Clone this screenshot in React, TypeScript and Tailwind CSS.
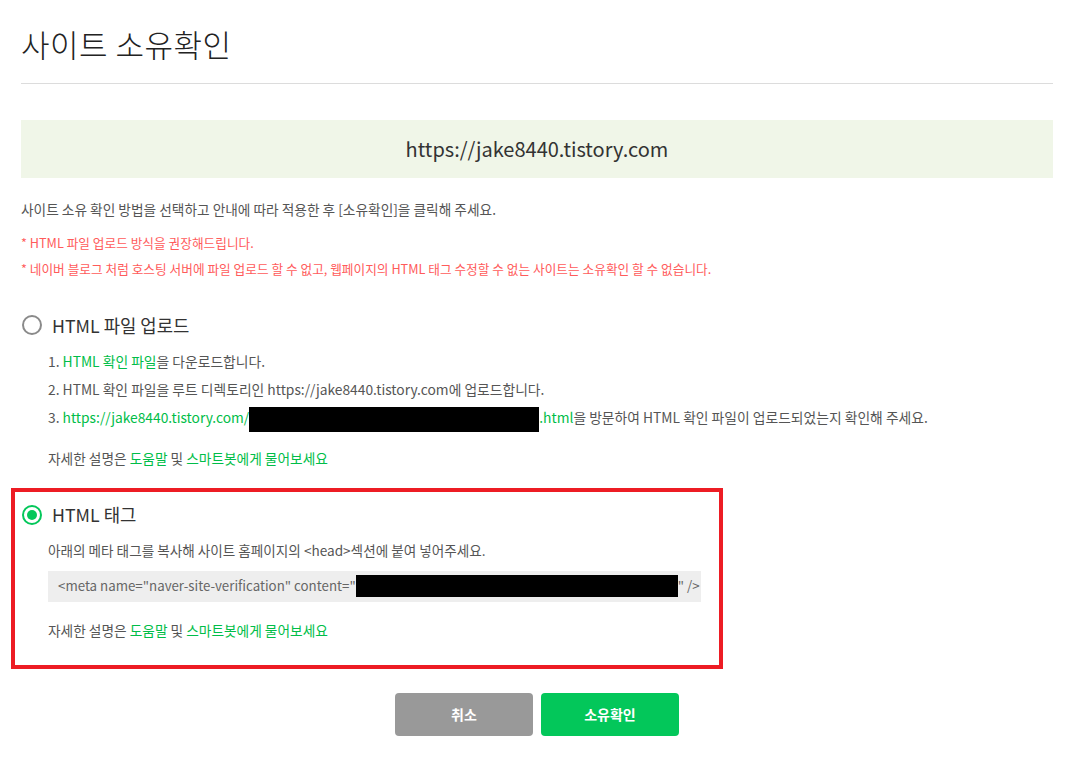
import React, { useState } from 'react';

const FONT = "font-['Noto_Sans_CJK_KR','Noto_Sans',sans-serif]";

const Radio: React.FC<{ checked: boolean }> = ({ checked }) => (
  <span
    className={`flex h-[20px] w-[20px] shrink-0 items-center justify-center rounded-full border-2 ${
      checked ? 'border-[#03c75a]' : 'border-[#8a8a8a]'
    }`}
  >
    {checked && <span className="h-[10px] w-[10px] rounded-full bg-[#03c75a]" />}
  </span>
);

const HelpLine = () => (
  <p className="text-[13.7px] leading-[28px] text-[#555]">
    자세한 설명은 <span className="text-[#00bd48]">도움말</span> 및{' '}
    <span className="text-[#00bd48]">스마트봇에게 물어보세요</span>
  </p>
);

export default function App() {
  const [method, setMethod] = useState<'file' | 'tag'>('tag');
  const site = 'https://jake8440.tistory.com';

  return (
    <div className={`${FONT} min-h-[762px] w-full bg-white pl-[21px] pr-[23px] pt-[22px]`}>
      <h1 className="text-[31px] font-light leading-[44px] tracking-[0.5px] text-[#222]">사이트 소유확인</h1>
      <div className="mt-[17px] h-px bg-[#dcdcdc]" />

      <div className="mt-[36px] flex h-[58px] items-center justify-center bg-[#f0f6e8] text-[20px] text-[#333]">
        {site}
      </div>

      <p className="mt-[21px] text-[13.7px] leading-[20px] text-[#555]">
        사이트 소유 확인 방법을 선택하고 안내에 따라 적용한 후 [소유확인]을 클릭해 주세요.
      </p>
      <div className="mt-[11px] text-[12.7px] leading-[26px] text-[#ff5b5b]">
        <p>* HTML 파일 업로드 방식을 권장해드립니다.</p>
        <p>* 네이버 블로그 처럼 호스팅 서버에 파일 업로드 할 수 없고, 웹페이지의 HTML 태그 수정할 수 없는 사이트는 소유확인 할 수 없습니다.</p>
      </div>

      {/* HTML file upload */}
      <div className="mt-[28px]">
        <label className="ml-px flex h-[30px] cursor-pointer items-center gap-[10px]" onClick={() => setMethod('file')}>
          <Radio checked={method === 'file'} />
          <span className="text-[17.8px] text-[#333]">HTML 파일 업로드</span>
        </label>
        <div className="mt-[7px] pl-[27px] text-[13.8px] leading-[28px] text-[#555]">
          <p>
            1. <span className="text-[#00bd48]">HTML 확인 파일</span>을 다운로드합니다.
          </p>
          <p>2. HTML 확인 파일을 루트 디렉토리인 {site}에 업로드합니다.</p>
          <p className="whitespace-nowrap">
            3. <span className="text-[#00bd48]">{site}/</span>
            <span className="inline-block h-[25px] w-[290px] bg-black align-middle" />
            <span className="text-[#00bd48]">.html</span>을 방문하여 HTML 확인 파일이 업로드되었는지 확인해 주세요.
          </p>
          <div className="mt-[12px]">
            <HelpLine />
          </div>
        </div>
      </div>

      {/* HTML tag */}
      <div className="-ml-[10px] mt-[16px] w-[712px] border-4 border-[#ed1c24] pb-[21px] pl-[7px] pt-[8px]">
        <label className="flex h-[30px] cursor-pointer items-center gap-[10px]" onClick={() => setMethod('tag')}>
          <Radio checked={method === 'tag'} />
          <span className="text-[17.8px] text-[#333]">HTML 태그</span>
        </label>
        <div className="pl-[26px]">
          <p className="mt-[6px] text-[13.6px] leading-[28px] text-[#555]">
            아래의 메타 태그를 복사해 사이트 홈페이지의 &lt;head&gt;섹션에 붙여 넣어주세요.
          </p>
          <div className="mt-[7px] flex h-[31px] w-[653px] items-center overflow-hidden whitespace-nowrap bg-[#eeeeee] pl-[10px] text-[13.3px] text-[#666]">
            <span>&lt;meta name="naver-site-verification" content="</span>
            <span className="inline-block h-[22px] w-[322px] shrink-0 bg-black" />
            <span>" /&gt;</span>
          </div>
          <div className="mt-[14px]">
            <HelpLine />
          </div>
        </div>
      </div>

      <div className="mt-[24px] flex justify-center gap-[8px]">
        <button className="h-[43px] w-[138px] rounded-[4px] bg-[#999999] text-[14px] font-bold text-white">취소</button>
        <button className="h-[43px] w-[138px] rounded-[4px] bg-[#03c75a] text-[14px] font-bold text-white">소유확인</button>
      </div>
    </div>
  );
}
